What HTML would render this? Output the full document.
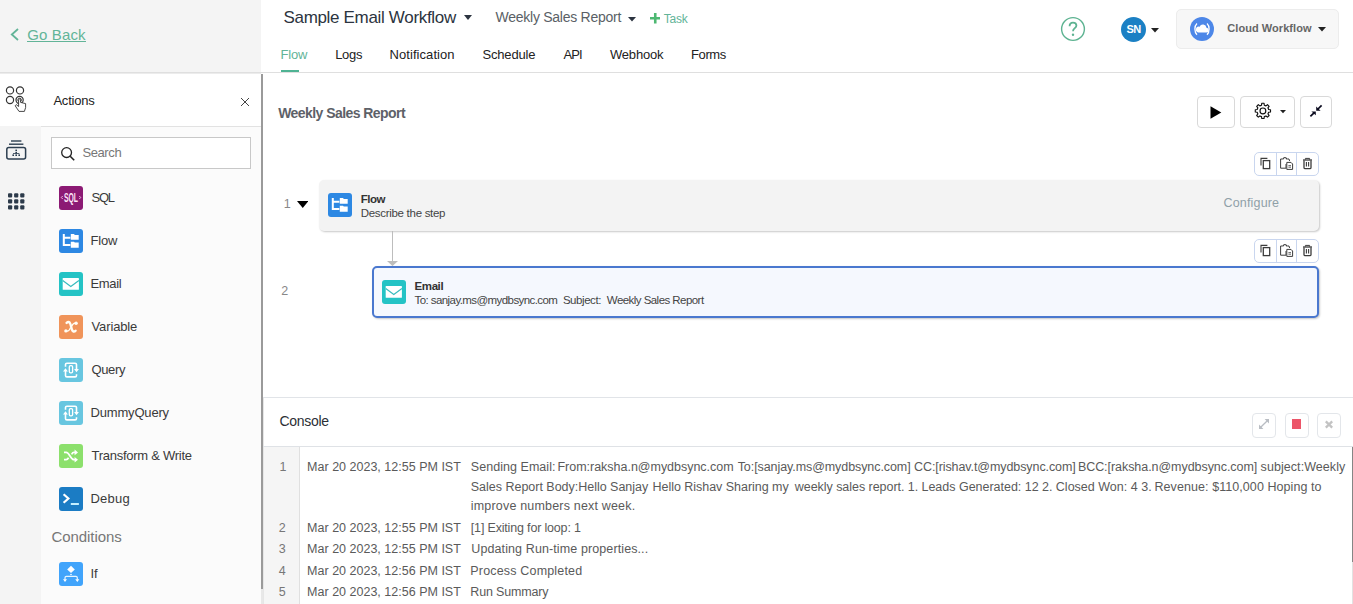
<!DOCTYPE html>
<html><head><meta charset="utf-8">
<style>
*{box-sizing:border-box;margin:0;padding:0}
html,body{width:1353px;height:604px;overflow:hidden;background:#fff;font-family:"Liberation Sans",sans-serif;color:#333}
.abs{position:absolute}
.t{position:absolute;white-space:pre;line-height:1}
.ic{position:absolute;left:59px;width:24px;height:24px;border-radius:3px;overflow:hidden}
.btn{position:absolute;border:1px solid #d9d9d9;border-radius:4px;background:#fff}
.grp{position:absolute;width:65px;height:24px;border:1px solid #c9d6ef;border-radius:5px;background:#fff}
.grp i{position:absolute;top:0;width:1px;height:22px;background:#c9d6ef}
.cbtn{position:absolute;width:24px;height:25px;border:1px solid #e3e6ea;border-radius:4px;background:#fff}
</style></head><body>
<!-- top-left -->
<div class="abs" style="left:0;top:0;width:261px;height:72px;background:#f4f4f4"></div>
<svg class="abs" style="left:10px;top:28px" width="10" height="13" viewBox="0 0 10 13"><path d="M8 1 L1.8 6.5 L8 12" fill="none" stroke="#62b498" stroke-width="1.8"/></svg>
<div class="abs" style="left:26.5px;top:41px;width:59.5px;height:1px;background:#62b498"></div>

<!-- rail + panel -->
<div class="abs" style="left:0;top:73px;width:41px;height:531px;background:#f4f4f4"></div>
<div class="abs" style="left:0;top:73px;width:41px;height:53px;background:#fff"></div>
<div class="abs" style="left:41px;top:73px;width:220px;height:531px;background:#fbfbfb"></div>
<div class="abs" style="left:41px;top:73px;width:220px;height:54px;background:#fff;border-bottom:1px solid #e2e2e2"></div>
<div class="abs" style="left:261px;top:74px;width:2px;height:530px;background:#e8e8e8"></div>
<div class="abs" style="left:261px;top:74px;width:2px;height:515px;background:#9a9a9a"></div>
<div class="abs" style="left:0;top:72px;width:1353px;height:1px;background:#dfdfdf"></div>
<div class="abs" style="left:0;top:73px;width:261px;height:1px;background:#ececec"></div>

<svg class="abs" style="left:240px;top:97px" width="10" height="10" viewBox="0 0 10 10"><path d="M1 1 L9 9 M9 1 L1 9" stroke="#444" stroke-width="1" fill="none"/></svg>
<div class="abs" style="left:51px;top:137px;width:200px;height:32px;border:1px solid #c8c8c8;background:#fff"></div>
<svg class="abs" style="left:60px;top:146px" width="16" height="16" viewBox="0 0 16 16"><circle cx="6.6" cy="6.6" r="4.9" fill="none" stroke="#222" stroke-width="1.3"/><path d="M10.2 10.2 L14.2 14.2" stroke="#222" stroke-width="1.6"/></svg>

<svg class="abs" style="left:0;top:73px" width="41" height="150" viewBox="0 0 41 150">
<g fill="none" stroke="#333" stroke-width="1.2"><circle cx="10" cy="17.4" r="3.6"/><circle cx="20" cy="17.4" r="3.6"/><circle cx="10" cy="27" r="3.6"/><circle cx="19.6" cy="27" r="3.6"/><circle cx="19.6" cy="27" r="1.8" stroke-width="0.9"/></g>
<path d="M18.6 26.6 V33.5 L16.2 31.6 L15.2 32.8 L19 38.4 H24.4 L25.6 34.6 V30.6 L20.6 29.4 V26.6 Q19.6 25.4 18.6 26.6 Z" fill="#fff" stroke="#333" stroke-width="0.9" stroke-linejoin="round"/>
<g stroke="#2c3e50" fill="none"><path d="M11 68 H21.4" stroke-width="1.4"/><path d="M9 71.2 H23.4" stroke-width="1.4"/><rect x="6.8" y="74.4" width="18.8" height="11.6" rx="2" stroke-width="1.5"/></g>
<g fill="#2c3e50"><rect x="15.4" y="76.6" width="1.6" height="1.6"/><rect x="15.4" y="79" width="1.6" height="1.6"/><rect x="12.4" y="81.4" width="1.6" height="1.6"/><rect x="15.4" y="81.4" width="1.6" height="1.6"/><rect x="18.4" y="81.4" width="1.6" height="1.6"/><rect x="13" y="80.2" width="6.4" height="0.8"/></g>
<g fill="#2c3a4a"><rect x="8" y="120.2" width="4.2" height="4.2" rx="1"/><rect x="14.1" y="120.2" width="4.2" height="4.2" rx="1"/><rect x="20.2" y="120.2" width="4.2" height="4.2" rx="1"/><rect x="8" y="126.2" width="4.2" height="4.2" rx="1"/><rect x="14.1" y="126.2" width="4.2" height="4.2" rx="1"/><rect x="20.2" y="126.2" width="4.2" height="4.2" rx="1"/><rect x="8" y="132.2" width="4.2" height="4.2" rx="1"/><rect x="14.1" y="132.2" width="4.2" height="4.2" rx="1"/><rect x="20.2" y="132.2" width="4.2" height="4.2" rx="1"/></g>
</svg>
<svg class="abs" style="left:59px;top:186px" width="24" height="24" viewBox="0 0 24 24"><rect width="24" height="24" rx="3" fill="#8c1a74"/><text x="12" y="15.9" font-family="Liberation Sans" font-weight="bold" font-size="12.2" fill="#fde6f8" text-anchor="middle" textLength="14" lengthAdjust="spacingAndGlyphs">SQL</text><path d="M3.7 10 L2.3 11.5 L3.7 13 M20.3 10 L21.7 11.5 L20.3 13" stroke="#f3bfe6" stroke-width="1" fill="none"/></svg>
<svg class="abs" style="left:59px;top:229px" width="24" height="24" viewBox="0 0 24 24"><rect width="24" height="24" rx="3" fill="#2d88e3"/><path d="M4.8 4.9 V16 H11.4 M4.8 8.8 H11.4" stroke="#fff" stroke-width="2" fill="none"/><path d="M11.8 5.1 H15 L15.8 6 H19.7 V10.7 H11.8 Z M11.8 12.7 H15 L15.8 13.6 H19.7 V18.8 H11.8 Z" fill="#fff"/></svg>
<svg class="abs" style="left:59px;top:272px" width="24" height="24" viewBox="0 0 24 24"><rect width="24" height="24" rx="3" fill="#24c3c5"/><rect x="3.7" y="5.9" width="16.2" height="11.9" rx="0.6" fill="#fff"/><path d="M3.7 8.4 L11.8 14.4 L19.9 8.4" stroke="#38bcbe" stroke-width="1.2" fill="none"/></svg>
<svg class="abs" style="left:59px;top:315px" width="24" height="24" viewBox="0 0 24 24"><rect width="24" height="24" rx="3" fill="#f0945a"/><path d="M7.6 7.9 Q9.4 6.3 10.7 7.6 Q11.6 8.8 12.2 12 Q12.9 15.9 14.4 16.5 Q15.6 16.8 16.6 15.7" stroke="#fffdf5" stroke-width="2.4" fill="none" stroke-linecap="round"/><path d="M17 8.2 Q14.2 7.4 12.7 11.4 M11.5 12.6 Q10 16.9 7 15.9" stroke="#fffdf5" stroke-width="1.2" fill="none"/><circle cx="17.1" cy="8.3" r="1.7" fill="#fffdf5"/><circle cx="6.9" cy="15.9" r="1.7" fill="#fffdf5"/></svg>
<svg class="abs" style="left:59px;top:358px" width="24" height="24" viewBox="0 0 24 24"><rect width="24" height="24" rx="3" fill="#68c6e0"/><path d="M6.5 8.8 V6.6 Q6.5 5.2 7.9 5.2 H16.1 Q17.5 5.2 17.5 6.6 V11.5 M17.5 16.2 V17.5 Q17.5 18.9 16.1 18.9 H7.9 Q6.5 18.9 6.5 17.5 V13" stroke="#fff" stroke-width="1.6" fill="none"/><path d="M15.1 11 H19.9 L17.5 14.3 Z M4 13.6 H8.9 L6.5 10.3 Z" fill="#fff"/><rect x="10.3" y="7.6" width="3.3" height="7.3" rx="1.3" stroke="#fff" stroke-width="1.3" fill="none"/></svg>
<svg class="abs" style="left:59px;top:401px" width="24" height="24" viewBox="0 0 24 24"><rect width="24" height="24" rx="3" fill="#68c6e0"/><path d="M6.5 8.8 V6.6 Q6.5 5.2 7.9 5.2 H16.1 Q17.5 5.2 17.5 6.6 V11.5 M17.5 16.2 V17.5 Q17.5 18.9 16.1 18.9 H7.9 Q6.5 18.9 6.5 17.5 V13" stroke="#fff" stroke-width="1.6" fill="none"/><path d="M15.1 11 H19.9 L17.5 14.3 Z M4 13.6 H8.9 L6.5 10.3 Z" fill="#fff"/><rect x="10.3" y="7.6" width="3.3" height="7.3" rx="1.3" stroke="#fff" stroke-width="1.3" fill="none"/></svg>
<svg class="abs" style="left:59px;top:444px" width="24" height="24" viewBox="0 0 24 24"><rect width="24" height="24" rx="3" fill="#8ce06c"/><path d="M5 8.4 H7.2 C10.5 8.4 11.5 15.7 15 15.7 H16 M5 15.7 H7.2 C8.4 15.7 9 14.8 9.6 13.8 M12.6 10.3 C13.2 9.2 14 8.4 15 8.4 H16" stroke="#fff" stroke-width="1.7" fill="none"/><path d="M15.6 5.6 L19 8.4 L15.6 11.2 Z M15.6 12.9 L19 15.7 L15.6 18.5 Z" fill="#fff"/></svg>
<svg class="abs" style="left:59px;top:487px" width="24" height="24" viewBox="0 0 24 24"><rect width="24" height="24" rx="3" fill="#1b7cc4"/><path d="M4.6 7.2 L9.4 11.5 L4.6 15.8" stroke="#fff" stroke-width="2.2" fill="none"/><rect x="11.8" y="16" width="8.1" height="2" fill="#c4efff"/></svg>
<svg class="abs" style="left:59px;top:562px" width="24" height="24" viewBox="0 0 24 24"><rect width="24" height="24" rx="3" fill="#41a4fb"/><path d="M12 3.8 L15.8 7.4 L12 11 L8.2 7.4 Z" fill="#fff"/><circle cx="12" cy="12.5" r="0.8" fill="#fff"/><path d="M6 17.6 V15.8 Q6 14.4 7.4 14.4 H16.9 Q18.3 14.4 18.3 15.8 V17.6" stroke="#e8f6ff" stroke-width="1.2" fill="none"/><path d="M4 17.3 H8 L6 19.9 Z M16.3 17.3 H20.3 L18.3 19.9 Z" fill="#fff"/></svg>

<!-- main header -->
<svg class="abs" style="left:464px;top:15px" width="8" height="5" viewBox="0 0 8 5"><path d="M0 0 H8 L4 5 Z" fill="#2c3440"/></svg>
<svg class="abs" style="left:628px;top:17px" width="8" height="5" viewBox="0 0 8 5"><path d="M0 0 H8 L4 4.5 Z" fill="#2c3440"/></svg>
<svg class="abs" style="left:649.5px;top:13px" width="10.5" height="10.5" viewBox="0 0 10.5 10.5"><path d="M5.25 0 V10.5 M0 5.25 H10.5" stroke="#4db872" stroke-width="2.6" fill="none"/></svg>
<div class="abs" style="left:281px;top:70px;width:18px;height:2px;background:#4fb393"></div>

<!-- right header -->
<svg class="abs" style="left:1060px;top:16px" width="26" height="26" viewBox="0 0 26 26"><circle cx="13" cy="13" r="11.4" fill="none" stroke="#5db391" stroke-width="1.4"/><path d="M9.6 10.2 C9.6 7.6 11.2 6.6 13 6.6 C15 6.6 16.4 7.8 16.4 9.6 C16.4 12.2 13 12.2 13 15.3" fill="none" stroke="#5db391" stroke-width="1.8"/><circle cx="13" cy="18.7" r="1.2" fill="#5db391"/></svg>
<div class="abs" style="left:1121px;top:17px;width:25px;height:25px;border-radius:50%;background:#1b80c4"></div>
<svg class="abs" style="left:1151px;top:27.5px" width="8" height="5" viewBox="0 0 8 5"><path d="M0 0 H8 L4 4.5 Z" fill="#222"/></svg>
<div class="abs" style="left:1176px;top:9px;width:163px;height:40px;background:#f7f7f7;border:1px solid #ececec;border-radius:5px"></div>
<div class="abs" style="left:1190px;top:17px;width:24px;height:24px;border-radius:50%;background:#4d87e8"></div>
<svg class="abs" style="left:1190px;top:17px" width="24" height="24" viewBox="0 0 24 24"><path d="M8 15.5 h8.2 a2.4 2.4 0 0 0 0.3 -4.8 a3.6 3.6 0 0 0 -6.9 -0.9 a2.9 2.9 0 0 0 -1.6 5.7 z" fill="#fff"/><path d="M7 6.5 C4.2 9 4.2 15 7 17.8" fill="none" stroke="#fff" stroke-width="1.3"/><path d="M17 6.5 C19.8 9 19.8 15 17 17.8" fill="none" stroke="#fff" stroke-width="1.3"/></svg>
<svg class="abs" style="left:1317.5px;top:27px" width="8" height="5" viewBox="0 0 8 5"><path d="M0 0 H8 L4 4.5 Z" fill="#222"/></svg>

<!-- canvas buttons -->
<div class="btn" style="left:1197px;top:96px;width:38px;height:32px"></div>
<div class="btn" style="left:1240px;top:96px;width:55px;height:32px"></div>
<div class="btn" style="left:1300px;top:96px;width:32px;height:32px"></div>
<svg class="abs" style="left:1210px;top:105.5px" width="12" height="13" viewBox="0 0 12 13"><path d="M0.5 0.3 L11.3 6.5 L0.5 12.7 Z" fill="#000"/></svg>
<svg class="abs" style="left:1253px;top:101px" width="20" height="20" viewBox="0 0 20 20"><path d="M8.52 4.16 L8.76 2.29 L11.04 2.29 L11.28 4.16 L12.98 4.87 L14.47 3.71 L16.09 5.33 L14.93 6.82 L15.64 8.52 L17.51 8.76 L17.51 11.04 L15.64 11.28 L14.93 12.98 L16.09 14.47 L14.47 16.09 L12.98 14.93 L11.28 15.64 L11.04 17.51 L8.76 17.51 L8.52 15.64 L6.82 14.93 L5.33 16.09 L3.71 14.47 L4.87 12.98 L4.16 11.28 L2.29 11.04 L2.29 8.76 L4.16 8.52 L4.87 6.82 L3.71 5.33 L5.33 3.71 L6.82 4.87 Z" fill="none" stroke="#111" stroke-width="1.15" stroke-linejoin="round"/><circle cx="9.9" cy="9.9" r="2.9" fill="none" stroke="#111" stroke-width="1.15"/></svg>
<svg class="abs" style="left:1280px;top:110px" width="6" height="4" viewBox="0 0 6 4"><path d="M0 0 H6 L3 3.3 Z" fill="#222"/></svg>
<svg class="abs" style="left:1306px;top:101px" width="20" height="20" viewBox="0 0 20 20"><path d="M15.6 4.4 L12 8 M4.4 15.4 L8 11.8" stroke="#0a0a1e" stroke-width="1.7" fill="none"/><path d="M10.2 5.6 V9.7 H14.6 Z M5.4 10.5 H9.8 V14.3 Z" fill="#0a0a1e"/></svg>

<!-- step 1 -->
<div class="grp" style="left:1254px;top:152px"><i style="left:20.9px"></i><i style="left:40.9px"></i></div>
<div class="abs" style="left:318.5px;top:179.5px;width:1000.5px;height:51.5px;background:#f3f3f3;border-radius:5px;box-shadow:1px 1px 2px rgba(0,0,0,0.22)"></div>
<svg class="abs" style="left:296.5px;top:200.5px" width="11.5" height="7" viewBox="0 0 11.5 7"><path d="M0 0 H11.5 L5.75 7 Z" fill="#000"/></svg>
<div class="abs" style="left:392px;top:231px;width:1px;height:31px;background:#bdbdbd"></div>
<svg class="abs" style="left:387px;top:261px" width="11" height="5" viewBox="0 0 11 5"><path d="M0 0 H11 L5.5 5 Z" fill="#bdbdbd"/></svg>

<!-- step 2 -->
<div class="grp" style="left:1254px;top:239px"><i style="left:20.9px"></i><i style="left:40.9px"></i></div>
<div class="abs" style="left:372px;top:266px;width:947px;height:52px;background:#f5f8fe;border:2px solid #4a78cf;border-radius:5px;box-shadow:1px 1px 2px rgba(0,0,0,0.22)"></div>
<svg class="abs" style="left:328px;top:193px" width="24" height="24" viewBox="0 0 24 24"><rect width="24" height="24" rx="3" fill="#2d88e3"/><path d="M4.8 4.9 V16 H11.4 M4.8 8.8 H11.4" stroke="#fff" stroke-width="2" fill="none"/><path d="M11.8 5.1 H15 L15.8 6 H19.7 V10.7 H11.8 Z M11.8 12.7 H15 L15.8 13.6 H19.7 V18.8 H11.8 Z" fill="#fff"/></svg>
<svg class="abs" style="left:382px;top:280px" width="24" height="24" viewBox="0 0 24 24"><rect width="24" height="24" rx="3" fill="#24c3c5"/><rect x="3.7" y="5.9" width="16.2" height="11.9" rx="0.6" fill="#fff"/><path d="M3.7 8.4 L11.8 14.4 L19.9 8.4" stroke="#38bcbe" stroke-width="1.2" fill="none"/></svg>
<svg class="abs" style="left:1254px;top:152px" width="65" height="24" viewBox="0 0 65 24">
<path d="M7 13.4 V6.4 H13.4" stroke="#3c3c3c" stroke-width="1.1" fill="none"/><rect x="9.3" y="8.6" width="6.4" height="8" stroke="#3c3c3c" stroke-width="1.3" fill="none"/>
<path d="M32 12 V16.2 H26.6 V7 H28.4 M33.4 7 H35 L35.6 9" stroke="#3c3c3c" stroke-width="1" fill="none"/><path d="M28.6 7.4 Q30.9 3.6 33.2 7.4" stroke="#3c3c3c" stroke-width="1.1" fill="none"/><path d="M32.8 10.4 H37 L38.6 12 V17.4 H32.8 Z" stroke="#3c3c3c" stroke-width="1" fill="#fff"/><path d="M34.4 13.6 H37 M34.4 15.2 H37" stroke="#3c3c3c" stroke-width="0.8"/>
<path d="M49 8 H58" stroke="#3c3c3c" stroke-width="1.3"/><path d="M51.4 7.6 V6.4 H55.6 V7.6" stroke="#3c3c3c" stroke-width="1" fill="none"/><path d="M50 8.4 V15.4 Q50 16.6 51.2 16.6 H55.8 Q57 16.6 57 15.4 V8.4" stroke="#3c3c3c" stroke-width="1.3" fill="none"/><path d="M52.4 10 V14.6 M54.6 10 V14.6" stroke="#3c3c3c" stroke-width="1.1"/>
</svg><svg class="abs" style="left:1254px;top:239px" width="65" height="24" viewBox="0 0 65 24">
<path d="M7 13.4 V6.4 H13.4" stroke="#3c3c3c" stroke-width="1.1" fill="none"/><rect x="9.3" y="8.6" width="6.4" height="8" stroke="#3c3c3c" stroke-width="1.3" fill="none"/>
<path d="M32 12 V16.2 H26.6 V7 H28.4 M33.4 7 H35 L35.6 9" stroke="#3c3c3c" stroke-width="1" fill="none"/><path d="M28.6 7.4 Q30.9 3.6 33.2 7.4" stroke="#3c3c3c" stroke-width="1.1" fill="none"/><path d="M32.8 10.4 H37 L38.6 12 V17.4 H32.8 Z" stroke="#3c3c3c" stroke-width="1" fill="#fff"/><path d="M34.4 13.6 H37 M34.4 15.2 H37" stroke="#3c3c3c" stroke-width="0.8"/>
<path d="M49 8 H58" stroke="#3c3c3c" stroke-width="1.3"/><path d="M51.4 7.6 V6.4 H55.6 V7.6" stroke="#3c3c3c" stroke-width="1" fill="none"/><path d="M50 8.4 V15.4 Q50 16.6 51.2 16.6 H55.8 Q57 16.6 57 15.4 V8.4" stroke="#3c3c3c" stroke-width="1.3" fill="none"/><path d="M52.4 10 V14.6 M54.6 10 V14.6" stroke="#3c3c3c" stroke-width="1.1"/>
</svg>

<!-- console -->
<div class="abs" style="left:263px;top:397px;width:1090px;height:1px;background:#e1e4e8"></div>
<div class="abs" style="left:263px;top:398px;width:1px;height:206px;background:#e6e6e6"></div>
<div class="cbtn" style="left:1252px;top:413px"></div>
<div class="cbtn" style="left:1285px;top:413px"></div>
<div class="cbtn" style="left:1317px;top:413px"></div>
<div class="abs" style="left:1292px;top:419px;width:9.2px;height:10px;background:#ec5569"></div>
<svg class="abs" style="left:1258px;top:418px" width="12" height="12" viewBox="0 0 12 12"><path d="M2.2 9.8 L9.8 2.2" stroke="#b9bdc3" stroke-width="1.3"/><path d="M6.6 1 H11 V5.4 Z M1 6.6 V11 H5.4 Z" fill="#b9bdc3"/></svg>
<svg class="abs" style="left:1324px;top:420px" width="10" height="9" viewBox="0 0 10 9"><path d="M1.8 1.4 L8.2 7.6 M8.2 1.4 L1.8 7.6" stroke="#c3c3c3" stroke-width="2.3"/></svg>
<div class="abs" style="left:263px;top:446px;width:1090px;height:1px;background:#dfe2e6"></div>
<div class="abs" style="left:264px;top:447px;width:36px;height:157px;background:#f5f5f5;border-right:1px solid #e0e0e0"></div>
<div class="abs" style="left:1351.6px;top:447px;width:1.4px;height:157px;background:#e2e2e2"></div>
<div class="abs" style="left:1351.6px;top:447px;width:1.4px;height:115px;background:#858585"></div>

<div class="t" style="left:27.30px;top:27px;font-size:15px;color:#62b498;letter-spacing:0.113px">Go Back</div>
<div class="t" style="left:53.40px;top:94px;font-size:13px;color:#222;letter-spacing:-0.205px">Actions</div>
<div class="t" style="left:82.40px;top:146px;font-size:13px;color:#777;letter-spacing:-0.392px">Search</div>
<div class="t" style="left:91.50px;top:191px;font-size:13px;color:#3a3a3a;letter-spacing:-1.291px">SQL</div>
<div class="t" style="left:90.50px;top:234px;font-size:13px;color:#3a3a3a;letter-spacing:-0.186px">Flow</div>
<div class="t" style="left:90.50px;top:277px;font-size:13px;color:#3a3a3a;letter-spacing:-0.330px">Email</div>
<div class="t" style="left:91.50px;top:320px;font-size:13px;color:#3a3a3a;letter-spacing:-0.129px">Variable</div>
<div class="t" style="left:91.50px;top:363px;font-size:13px;color:#3a3a3a;letter-spacing:-0.375px">Query</div>
<div class="t" style="left:90.50px;top:406px;font-size:13px;color:#3a3a3a;letter-spacing:-0.175px">DummyQuery</div>
<div class="t" style="left:91.50px;top:449px;font-size:13px;color:#3a3a3a;letter-spacing:-0.263px">Transform &amp; Write</div>
<div class="t" style="left:90.50px;top:492px;font-size:13px;color:#3a3a3a;letter-spacing:0.230px">Debug</div>
<div class="t" style="left:51.50px;top:529px;font-size:15px;color:#777;letter-spacing:-0.064px">Conditions</div>
<div class="t" style="left:90.40px;top:567px;font-size:13px;color:#3a3a3a;letter-spacing:-0.012px">If</div>
<div class="t" style="left:283.50px;top:9px;font-size:17px;color:#2c3440;letter-spacing:-0.325px">Sample Email Workflow</div>
<div class="t" style="left:495.60px;top:10px;font-size:14px;color:#5a5f66;letter-spacing:-0.265px">Weekly Sales Report</div>
<div class="t" style="left:663.70px;top:13px;font-size:12px;color:#62b498;letter-spacing:-0.225px">Task</div>
<div class="t" style="left:280.50px;top:48px;font-size:13px;color:#62b498;letter-spacing:-0.153px">Flow</div>
<div class="t" style="left:335.20px;top:48px;font-size:13px;color:#222;letter-spacing:-0.330px">Logs</div>
<div class="t" style="left:389.60px;top:48px;font-size:13px;color:#222;letter-spacing:0.057px">Notification</div>
<div class="t" style="left:482.40px;top:48px;font-size:13px;color:#222;letter-spacing:-0.154px">Schedule</div>
<div class="t" style="left:563.40px;top:48px;font-size:13px;color:#222;letter-spacing:-0.871px">API</div>
<div class="t" style="left:609.90px;top:48px;font-size:13px;color:#222;letter-spacing:-0.164px">Webhook</div>
<div class="t" style="left:691.10px;top:48px;font-size:13px;color:#222;letter-spacing:-0.432px">Forms</div>
<div class="t" style="left:1126.40px;top:24px;font-size:11px;color:#fff;letter-spacing:-0.437px;font-weight:bold">SN</div>
<div class="t" style="left:1227.30px;top:23px;font-size:11px;color:#666;letter-spacing:0.050px;font-weight:bold">Cloud Workflow</div>
<div class="t" style="left:278.20px;top:106px;font-size:14px;color:#5d6168;letter-spacing:-0.556px;font-weight:bold">Weekly Sales Report</div>
<div class="t" style="left:283.70px;top:198px;font-size:12.5px;color:#888;letter-spacing:0.000px">1</div>
<div class="t" style="left:360.70px;top:194px;font-size:11.5px;color:#333;letter-spacing:-0.481px;font-weight:bold">Flow</div>
<div class="t" style="left:360.70px;top:208px;font-size:11.5px;color:#444;letter-spacing:-0.293px">Describe the step</div>
<div class="t" style="left:1223.50px;top:197px;font-size:12.5px;color:#8fa0a8;letter-spacing:0.169px">Configure</div>
<div class="t" style="left:281.20px;top:285px;font-size:12.5px;color:#888;letter-spacing:0.000px">2</div>
<div class="t" style="left:414.60px;top:281px;font-size:11.5px;color:#333;letter-spacing:-0.422px;font-weight:bold">Email</div>
<div class="t" style="left:414.60px;top:295px;font-size:11.5px;color:#444;letter-spacing:-0.581px">To: sanjay.ms@mydbsync.com</div>
<div class="t" style="left:562.90px;top:295px;font-size:11.5px;color:#444;letter-spacing:-0.437px">Subject:</div>
<div class="t" style="left:606.80px;top:295px;font-size:11.5px;color:#444;letter-spacing:-0.548px">Weekly Sales Report</div>
<div class="t" style="left:279.60px;top:414px;font-size:14px;color:#2b2f36;letter-spacing:-0.330px">Console</div>
<div class="t" style="left:279.60px;top:461px;font-size:12.5px;color:#777;letter-spacing:0.000px">1</div>
<div class="t" style="left:307.10px;top:461px;font-size:12.5px;color:#5a5a5a;letter-spacing:0.008px">Mar 20 2023, 12:55 PM IST</div>
<div class="t" style="left:278.70px;top:522px;font-size:12.5px;color:#777;letter-spacing:0.000px">2</div>
<div class="t" style="left:307.10px;top:522px;font-size:12.5px;color:#5a5a5a;letter-spacing:0.008px">Mar 20 2023, 12:55 PM IST</div>
<div class="t" style="left:278.70px;top:543px;font-size:12.5px;color:#777;letter-spacing:0.000px">3</div>
<div class="t" style="left:307.10px;top:543px;font-size:12.5px;color:#5a5a5a;letter-spacing:0.008px">Mar 20 2023, 12:55 PM IST</div>
<div class="t" style="left:278.70px;top:565px;font-size:12.5px;color:#777;letter-spacing:0.000px">4</div>
<div class="t" style="left:307.10px;top:565px;font-size:12.5px;color:#5a5a5a;letter-spacing:0.008px">Mar 20 2023, 12:56 PM IST</div>
<div class="t" style="left:278.70px;top:586px;font-size:12.5px;color:#777;letter-spacing:0.000px">5</div>
<div class="t" style="left:307.10px;top:586px;font-size:12.5px;color:#5a5a5a;letter-spacing:0.008px">Mar 20 2023, 12:56 PM IST</div>
<div class="t" style="left:470.80px;top:461px;font-size:12.5px;color:#5a5a5a;letter-spacing:0.046px">Sending Email:</div>
<div class="t" style="left:557.50px;top:461px;font-size:12.5px;color:#5a5a5a;letter-spacing:-0.020px">From:raksha.n@mydbsync.com</div>
<div class="t" style="left:737.70px;top:461px;font-size:12.5px;color:#5a5a5a;letter-spacing:-0.078px">To:[sanjay.ms@mydbsync.com]</div>
<div class="t" style="left:914.00px;top:461px;font-size:12.5px;color:#5a5a5a;letter-spacing:-0.084px">CC:[rishav.t@mydbsync.com]</div>
<div class="t" style="left:1077.90px;top:461px;font-size:12.5px;color:#5a5a5a;letter-spacing:-0.055px">BCC:[raksha.n@mydbsync.com]</div>
<div class="t" style="left:1260.60px;top:461px;font-size:12.5px;color:#5a5a5a;letter-spacing:0.063px">subject:Weekly</div>
<div class="t" style="left:470.80px;top:481px;font-size:12.5px;color:#5a5a5a;letter-spacing:-0.015px">Sales Report Body:Hello Sanjay</div>
<div class="t" style="left:652.50px;top:481px;font-size:12.5px;color:#5a5a5a;letter-spacing:-0.028px">Hello Rishav Sharing my</div>
<div class="t" style="left:794.80px;top:481px;font-size:12.5px;color:#5a5a5a;letter-spacing:-0.045px">weekly sales report. 1.</div>
<div class="t" style="left:921.50px;top:481px;font-size:12.5px;color:#5a5a5a;letter-spacing:-0.018px">Leads Generated: 12 2.</div>
<div class="t" style="left:1055.80px;top:481px;font-size:12.5px;color:#5a5a5a;letter-spacing:0.015px">Closed Won: 4 3.</div>
<div class="t" style="left:1154.50px;top:481px;font-size:12.5px;color:#5a5a5a;letter-spacing:0.072px">Revenue: $110,000 Hoping to</div>
<div class="t" style="left:470.80px;top:500px;font-size:12.5px;color:#5a5a5a;letter-spacing:0.183px">improve numbers next week.</div>
<div class="t" style="left:470.80px;top:522px;font-size:12.5px;color:#5a5a5a;letter-spacing:-0.173px">[1] Exiting for loop: 1</div>
<div class="t" style="left:471.30px;top:543px;font-size:12.5px;color:#5a5a5a;letter-spacing:0.106px">Updating Run-time properties...</div>
<div class="t" style="left:470.30px;top:565px;font-size:12.5px;color:#5a5a5a;letter-spacing:0.173px">Process Completed</div>
<div class="t" style="left:470.30px;top:586px;font-size:12.5px;color:#5a5a5a;letter-spacing:-0.163px">Run Summary</div>
</body></html>
